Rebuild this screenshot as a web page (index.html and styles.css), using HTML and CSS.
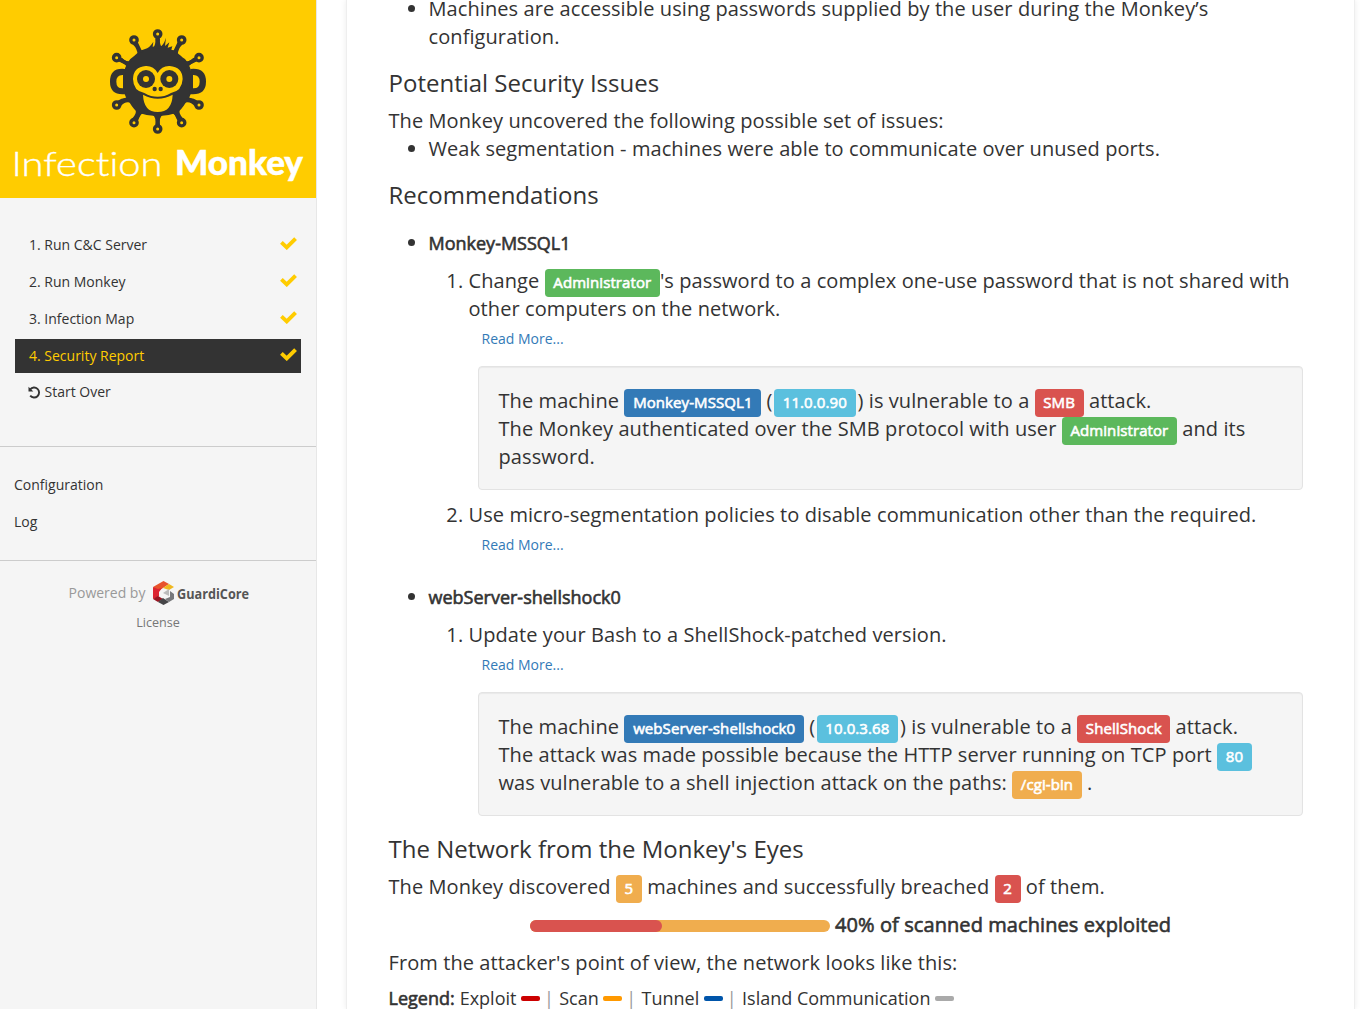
FILE: index.html
```html
<!DOCTYPE html>
<html lang="en">
<head>
<meta charset="utf-8">
<title>Infection Monkey</title>
<link rel="stylesheet" href="styles.css">
</head>
<body>
<svg class="defs" width="0" height="0">
  <symbol id="check" viewBox="0 0 48 36"><path d="M4 15 L19 29 L44 4" fill="none" stroke="currentColor" stroke-width="11"/></symbol>
</svg>
<div class="layout">
  <aside class="sidebar">
    <header class="brand">
      <svg width="316" height="198" viewBox="0 0 316 198">
        <g transform="translate(95 20) scale(.33333)">
          <g fill="none" stroke="#333" stroke-width="11">
            <path d="M188 50V100M122 66L142 108M254 66L234 108M71 116L112 140M305 116L264 140M71 249L112 230M305 249L264 230M122 302L142 264M254 302L234 264M188 320V270"/>
          </g>
          <g fill="#333">
            <path d="M188 77 Q202 87 213 53 L210 78 L223 67 L218 83 L232 79 L229 89 C246 93 250 103 270 117 Q291 139 292 185 Q292 229 272 248 Q258 271 246 278 Q188 299 130 278 Q118 271 104 248 Q84 229 84 185 Q85 139 106 117 C126 103 130 93 148 88 Q166 82 175 65 L173 80 Z"/>
            <path d="M81 113Q92 128 109 122L100 143Q85 128 67 122ZM295 113Q284 128 267 122L276 143Q291 128 309 122ZM67 243Q84 231 99 235L110 250Q92 241 77 259ZM309 243Q292 231 277 235L266 250Q284 241 299 259ZM128 68Q130 88 145 94L128 105Q127 86 113 73ZM248 68Q246 88 231 94L248 105Q249 86 263 73ZM113 294Q125 281 122 271L148 279Q130 284 130 299ZM263 294Q251 281 254 271L228 279Q246 284 246 299ZM181 55H195Q193 76 203 86H173Q183 76 181 55ZM173 284H203Q192 292 195 315H181Q184 292 173 284Z"/>
            <path fill-rule="evenodd" d="M90 147Q45 142 45 185Q45 227 92 222ZM84 165Q64 164 64 185Q64 206 84 205ZM286 147Q333 142 333 185Q333 227 284 222ZM294 165Q314 164 314 185Q314 206 294 205Z"/>
          </g>
          <g fill="#fc0" stroke="#333" stroke-width="10">
            <circle cx="188" cy="42" r="9.5"/><circle cx="117" cy="60" r="9.5"/><circle cx="260" cy="60" r="9.5"/><circle cx="65" cy="113" r="9.5"/><circle cx="312" cy="113" r="9.5"/><circle cx="65" cy="255" r="9.5"/><circle cx="312" cy="255" r="9.5"/><circle cx="117" cy="308" r="9.5"/><circle cx="260" cy="308" r="9.5"/><circle cx="188" cy="327" r="9.5"/>
          </g>
          <path fill="#fc0" d="M188 159Q200 137 224 138Q262 141 263 177Q261 213 228 219Q188 242 148 219Q115 213 114 177Q115 141 152 138Q176 137 188 159ZM144 224Q188 248 233 224Q231 276 188 276Q146 276 144 224Z"/>
          <g fill="#333"><circle cx="153" cy="177" r="27"/><circle cx="223" cy="177" r="27"/><circle cx="179" cy="207" r="6.5"/><circle cx="197" cy="207" r="6.5"/></g>
          <g fill="#fc0"><circle cx="153" cy="177" r="9"/><circle cx="223" cy="177" r="9"/></g>
        </g>
        <text class="brand-thin" x="11.5" y="175.5" textLength="151" lengthAdjust="spacingAndGlyphs">Infection</text>
        <text class="brand-bold" x="175" y="175" textLength="128" lengthAdjust="spacingAndGlyphs">Monkey</text>
      </svg>
    </header>
    <nav class="steps">
      <a class="step"><span>1. Run C&amp;C Server</span><svg class="check"><use href="#check"/></svg></a>
      <a class="step"><span>2. Run Monkey</span><svg class="check"><use href="#check"/></svg></a>
      <a class="step"><span>3. Infection Map</span><svg class="check"><use href="#check"/></svg></a>
      <a class="step active"><span>4. Security Report</span><svg class="check"><use href="#check"/></svg></a>
      <a class="step restart"><svg width="13" height="13" viewBox="0 0 13 13"><path d="M2.2 3.4A5 5 0 1 1 2.2 9.7" fill="none" stroke="currentColor" stroke-width="1.9"/><path d="M.5 .7V5.5H5.3Z" fill="currentColor"/></svg><span>Start Over</span></a>
    </nav>
    <nav class="links"><a>Configuration</a><a>Log</a></nav>
    <footer class="powered">
      <div class="powered-row"><span>Powered by</span>
        <svg width="98" height="26" viewBox="0 0 98 26">
          <path fill="#e8532b" d="M0 7L10.5 1L16 4L10 8L5 11Z"/><path fill="#efb71f" d="M16 4L21 7L16 10L10 8Z"/><path fill="#dc2431" d="M0 7L5 9V17L0 19Z"/><path fill="#dc2431" d="M5 9L9 8L6 12V16L5 17Z"/><path fill="#981522" d="M0 19L5 16L10 19L5 22Z"/><path fill="#454547" d="M5 22L10 18L16 22L10.5 25Z"/><path fill="#77787b" d="M17 11V17L12 19L16 22L21 19V14Z"/><path fill="#bbb" d="M10 13L16 9V16Z"/>
          <text class="guardi" x="24" y="18.5" textLength="72" lengthAdjust="spacingAndGlyphs">GuardiCore</text>
        </svg>
      </div>
      <a class="license">License</a>
    </footer>
  </aside>
  <main class="report">
    <ul class="first"><li>Machines are accessible using passwords supplied by the user during the Monkey’s<br>configuration.</li></ul>
    <h3>Potential Security Issues</h3>
    <p>The Monkey uncovered the following possible set of issues:</p>
    <ul><li>Weak segmentation - machines were able to communicate over unused ports.</li></ul>
    <h3>Recommendations</h3>
    <ul class="machines">
      <li><h4>Monkey-MSSQL1</h4>
        <ol>
          <li>Change <b class="label green">Administrator</b>'s password to a complex one-use password that is not shared with<br>other computers on the network.
            <a class="more">Read More...</a>
            <div class="well">The machine <b class="label blue">Monkey-MSSQL1</b> (<b class="label cyan address">11.0.0.90</b>) is vulnerable to a <b class="label red">SMB</b> attack.<br>The Monkey authenticated over the SMB protocol with user <b class="label green">Administrator</b> and its<br>password.</div>
          </li>
          <li>Use micro-segmentation policies to disable communication other than the required.
            <a class="more">Read More...</a>
          </li>
        </ol>
      </li>
      <li><h4>webServer-shellshock0</h4>
        <ol>
          <li>Update your Bash to a ShellShock-patched version.
            <a class="more">Read More...</a>
            <div class="well">The machine <b class="label blue">webServer-shellshock0</b> (<b class="label cyan address">10.0.3.68</b>) is vulnerable to a <b class="label red">ShellShock</b> attack.<br>The attack was made possible because the HTTP server running on TCP port <b class="label cyan">80</b><br>was vulnerable to a shell injection attack on the paths: <b class="label orange">/cgi-bin</b> .</div>
          </li>
        </ol>
      </li>
    </ul>
    <h3 class="network">The Network from the Monkey's Eyes</h3>
    <p>The Monkey discovered <b class="label orange">5</b> machines and successfully breached <b class="label red">2</b> of them.</p>
    <div class="exploited"><div class="progress"><div class="progress-value"></div></div><b>40% of scanned machines exploited</b></div>
    <p>From the attacker's point of view, the network looks like this:</p>
    <div class="legend"><b>Legend:</b><span>Exploit</span><i class="dash exploit"></i><em>|</em><span>Scan</span><i class="dash scan"></i><em>|</em><span>Tunnel</span><i class="dash tunnel"></i><em>|</em><span>Island Communication</span><i class="dash island"></i></div>
  </main>
</div>
</body>
</html>
```
FILE: styles.css
```css
* { box-sizing: border-box; }
body { margin: 0; height: 1009px; overflow: hidden; background: #fff; color: #333; font: 14px/20px "Open Sans", sans-serif; }
.defs { display: block; }
.layout { display: flex; height: 1009px; overflow: hidden; }
b, h4 { font-weight: 400; -webkit-text-stroke: .6px currentColor; }

.sidebar { flex: none; width: 317px; background: #f5f5f5; border-right: 1px solid #e7e7e7; }
.brand { height: 198px; background: #fc0; }
.brand svg { display: block; }
.brand text { fill: #fff; font-family: Lato, sans-serif; font-size: 34px; font-variant-ligatures: none; }
.brand .brand-thin { font-weight: 300; stroke: #fff; stroke-width: .4px; }
.brand .brand-bold { font-weight: 900; stroke: #fff; stroke-width: .5px; }
.steps { height: 249px; padding: 30px 15px 0; border-bottom: 1px solid #ccc; }
.step { display: flex; align-items: center; justify-content: space-between; height: 34px; margin-bottom: 3px; padding: 0 4.5px 0 14px; }
.active { background: #333; color: #fc0; }
.check { width: 17px; height: 13px; margin-bottom: 3px; color: #fc0; }
.restart { justify-content: flex-start; gap: 4px; padding-left: 12.5px; margin-top: -1px; }
.links { display: flex; flex-direction: column; gap: 17px; height: 114px; padding: 28px 14px; border-bottom: 1px solid #ccc; }
.powered { display: flex; flex-direction: column; align-items: center; gap: 7px; padding-top: 19px; color: #999; }
.powered-row { display: flex; align-items: center; gap: 8px; padding-left: 4px; }
.guardi { fill: #555; font: 700 14px "Open Sans", sans-serif; }
.license { color: #777; font-size: 12.6px; line-height: 20px; }

.report { flex: none; width: 1009px; margin-left: 29px; padding: 0 51px 0 41.5px; border: solid #eee; border-width: 0 1px; box-shadow: 0 0 6px rgba(0,0,0,.08); font-size: 20px; line-height: 28px; letter-spacing: .085px; white-space: nowrap; }
.report p { margin: 0; }
.report ul, .report ol { margin: 0; padding-left: 40px; }
.report .first { margin-top: -5px; }
h3 { margin: 20px 0 12px; font-size: 24px; font-weight: 400; line-height: 24px; letter-spacing: 0; }
.report .network { margin-top: 21px; }
h4 { margin: 0 0 14px; font-size: 18px; line-height: 20px; letter-spacing: 0; }
.report .machines { padding-top: 10px; }
.machines > li + li { margin-top: 20px; }
.more { display: block; width: max-content; height: 34px; padding: 6px 13px; color: #337ab7; font-size: 14px; line-height: 20px; letter-spacing: 0; }
.well { height: 124px; margin: 9px 0 11px 9.5px; padding: 20px 19px 18px 19.5px; background: #f5f5f5; border: 1px solid #e3e3e3; border-radius: 4px; box-shadow: inset 0 1px 1px rgba(0,0,0,.05); }
.label { padding: .2em .58em .3em; border-radius: .25em; color: #fff; font-size: 15px; line-height: 1; }
.address { margin: 0 2px 0 1.5px; }
.green { background: #5cb85c; }
.blue { background: #337ab7; }
.cyan { background: #5bc0de; }
.red { background: #d9534f; }
.orange { background: #f0ad4e; }
.exploited { display: flex; align-items: center; gap: 5px; height: 28px; margin: 10px 0 10px 141.5px; }
.progress { width: 300px; height: 12px; margin-top: 2px; border-radius: 6px; background: #f0ad4e; }
.progress-value { width: 132px; height: 12px; border-radius: 6px; background: #d9534f; }
.legend { display: flex; align-items: center; height: 28px; margin-top: 7px; font-size: 18px; letter-spacing: 0; }
.legend span { margin: 0 4.5px 0 5px; }
.legend em { margin: 0 .4px 0 4px; color: #999; font-style: normal; }
.dash { width: 19px; height: 5px; border-radius: 2px; }
.exploit { background: #c00; }
.scan { background: #f90; }
.tunnel { background: #05a; }
.island { background: #aaa; }
```
